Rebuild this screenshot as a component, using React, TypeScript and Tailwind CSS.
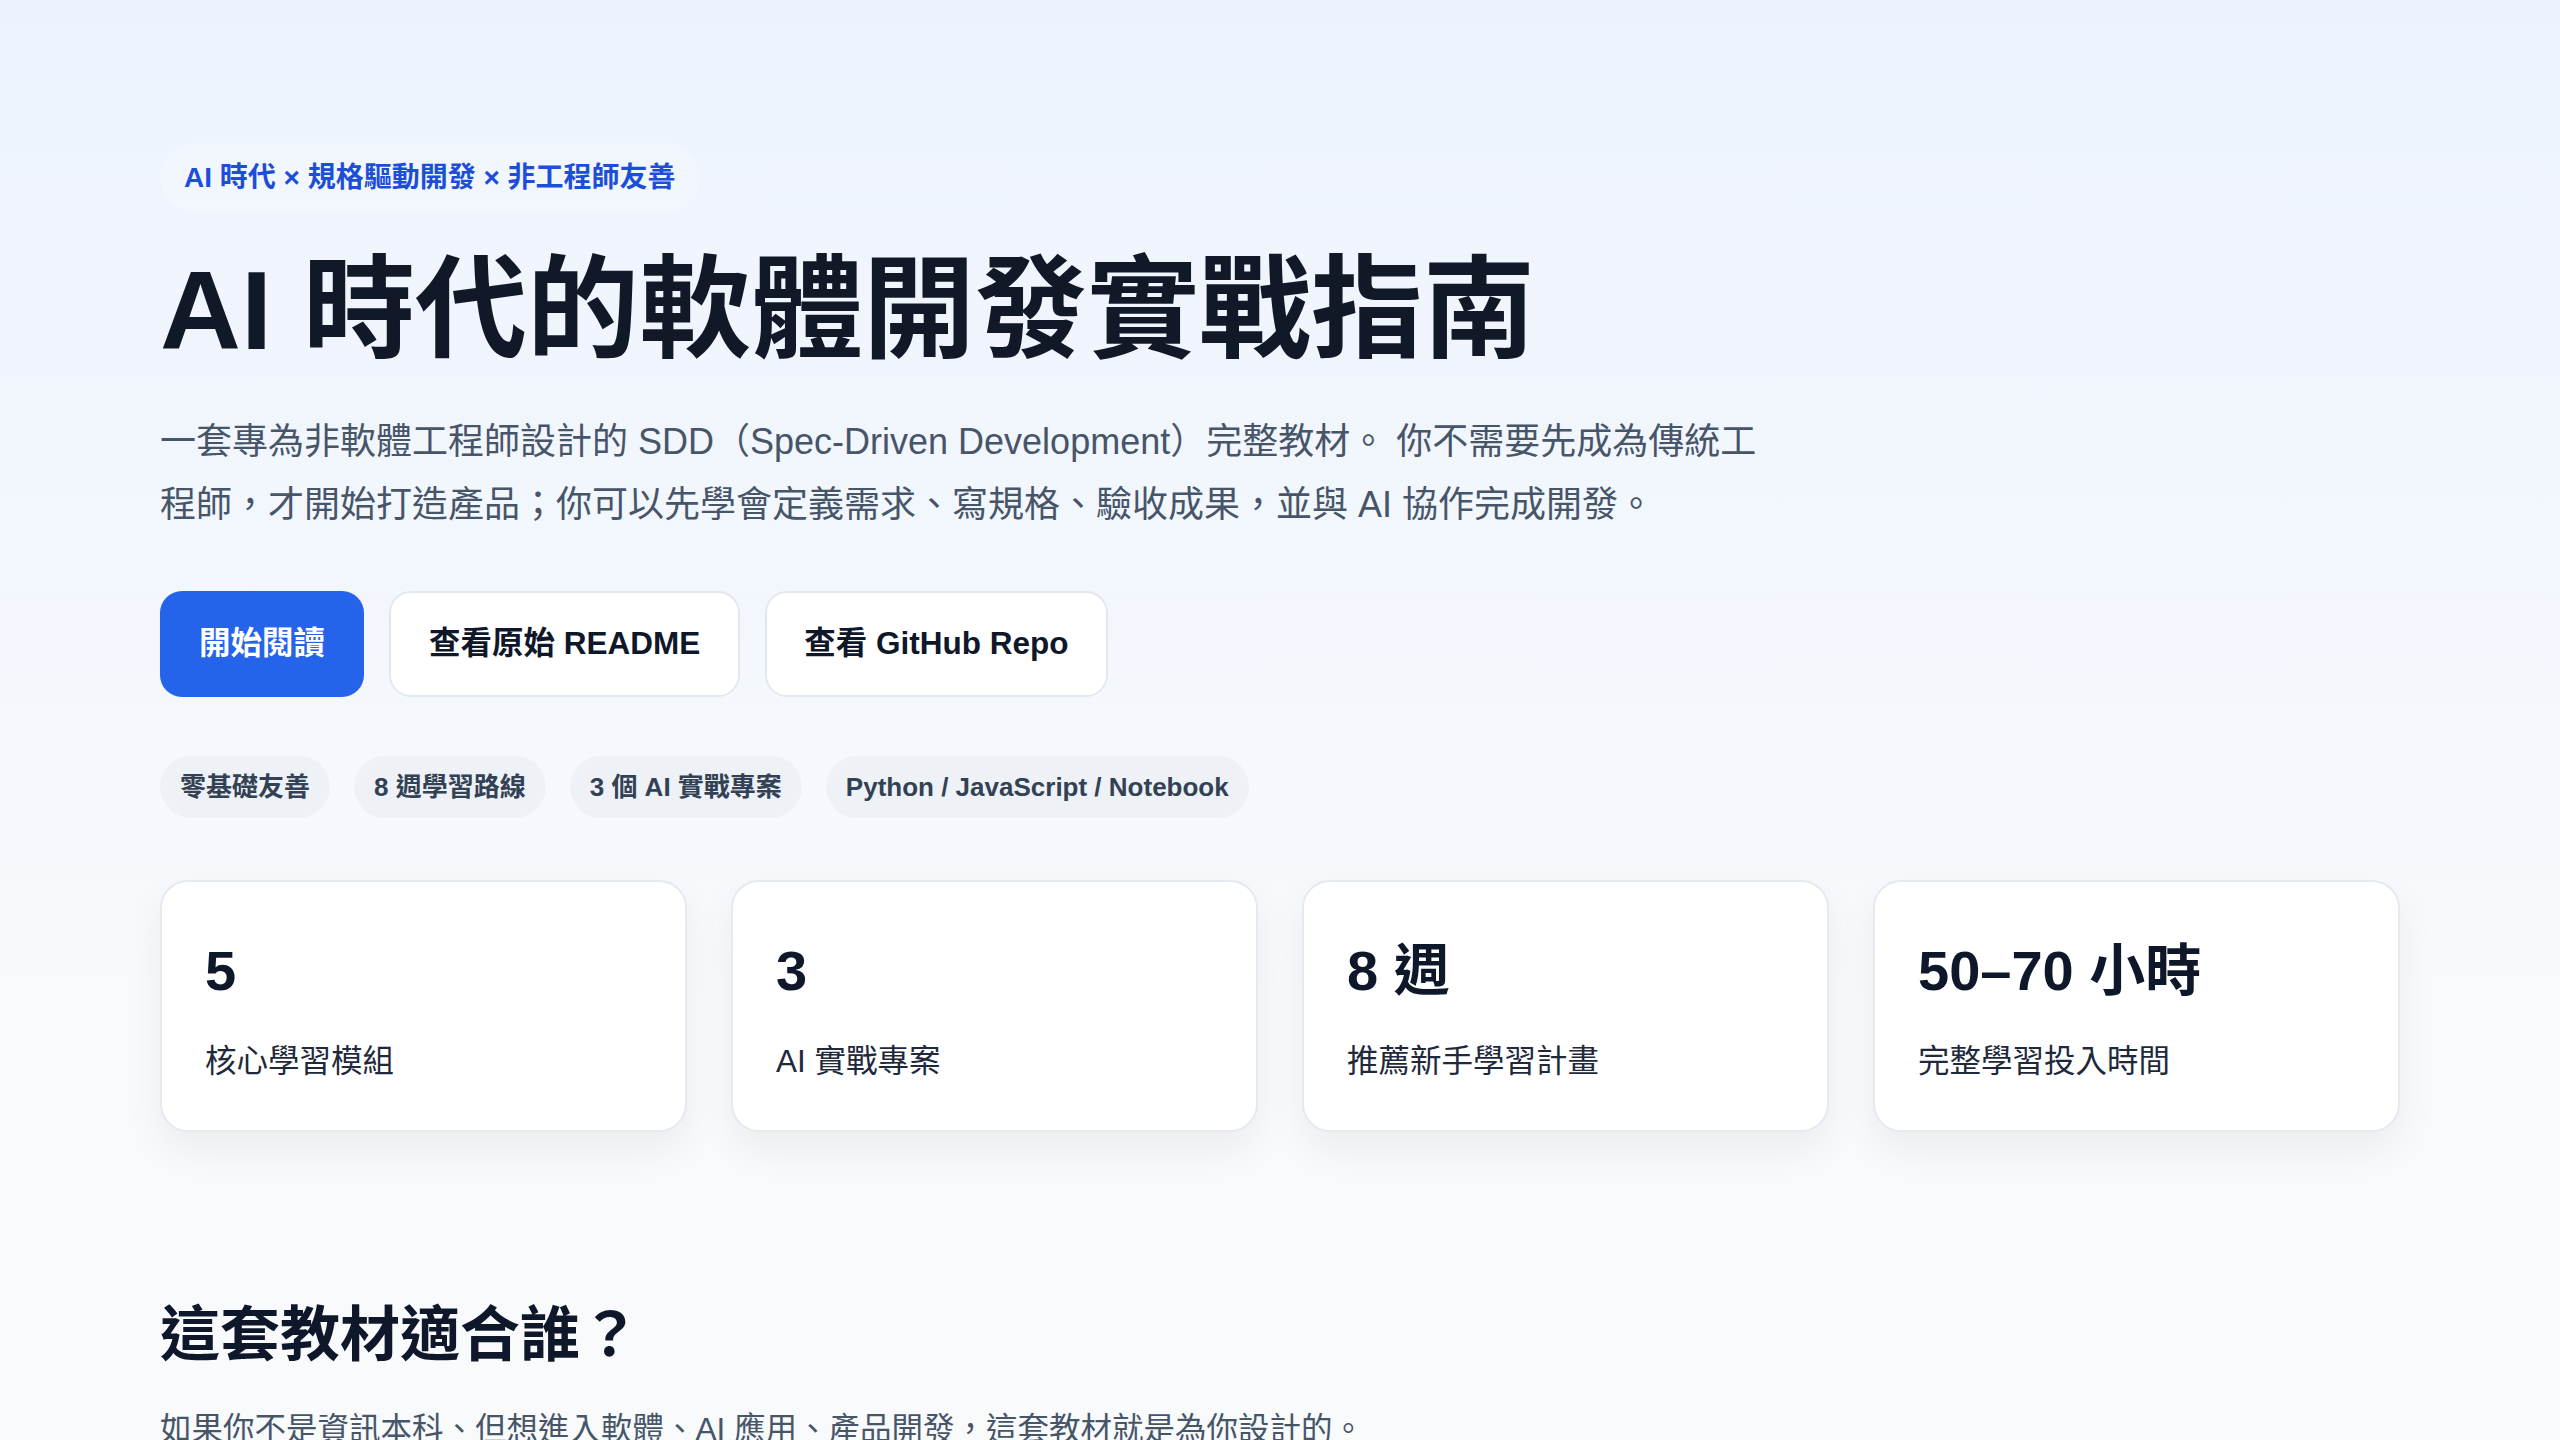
import React from "react";

const font = { fontFamily: '"Liberation Sans", "Noto Sans CJK TC", "Noto Sans", sans-serif' };

const stats = [
  { n: "5", label: "核心學習模組" },
  { n: "3", label: "AI 實戰專案" },
  { n: "8 週", label: "推薦新手學習計畫" },
  { n: "50–70 小時", label: "完整學習投入時間" },
];

const tags = ["零基礎友善", "8 週學習路線", "3 個 AI 實戰專案", "Python / JavaScript / Notebook"];

export default function App() {
  return (
    <div
      style={font}
      className="min-h-[1440px] w-full bg-[linear-gradient(180deg,#edf3fe_0px,#f3f7fd_600px,#f8fafc_1000px)] text-slate-900"
    >
      <main className="px-[160px] pt-[143px] pb-[200px]">
        <div className="inline-flex h-[70px] items-center rounded-full bg-white/20 px-[24px] text-[28px] font-semibold text-[#1d4ed8]">
          AI 時代 × 規格驅動開發 × 非工程師友善
        </div>
        <h1 className="mt-[36px] text-[112px] font-bold leading-[123px] text-[#111827]">
          AI 時代的軟體開發實戰指南
        </h1>
        <p className="mt-[38px] max-w-[1612px] text-[36px] leading-[63px] text-[#475569]">
          一套專為非軟體工程師設計的 SDD（Spec-Driven Development）完整教材。 你不需要先成為傳統工程師，才開始打造產品；你可以先學會定義需求、寫規格、驗收成果，並與 AI 協作完成開發。
        </p>
        <div className="mt-[55px] flex gap-[25px]">
          <button className="flex h-[106px] items-center rounded-[22px] bg-[#2563eb] px-[39px] text-[31.5px] font-bold text-white">
            開始閱讀
          </button>
          <button className="flex h-[106px] items-center rounded-[22px] border-2 border-[#e2e8f0] bg-white px-[38px] text-[31.5px] font-bold text-[#0f172a]">
            查看原始 README
          </button>
          <button className="flex h-[106px] items-center rounded-[22px] border-2 border-[#e2e8f0] bg-white px-[37px] text-[31.5px] font-bold text-[#0f172a]">
            查看 GitHub Repo
          </button>
        </div>
        <div className="mt-[59px] flex gap-[24px]">
          {tags.map((t) => (
            <span
              key={t}
              className="flex h-[62px] items-center rounded-full bg-[#eef2f6] px-[20px] text-[26px] font-semibold text-[#334155]"
            >
              {t}
            </span>
          ))}
        </div>
        <div className="mt-[62px] grid grid-cols-4 gap-[44px]">
          {stats.map((s) => (
            <div
              key={s.label}
              className="h-[252px] rounded-[28px] border-2 border-[#e5e9f0] bg-white px-[43px] pt-[54px] shadow-[0_18px_40px_rgba(15,23,42,0.06)]"
            >
              <div className="text-[56px] font-bold leading-[70px] text-[#0f172a]">{s.n}</div>
              <div className="mt-[31px] text-[31.5px] leading-[49px] text-[#1e293b]">{s.label}</div>
            </div>
          ))}
        </div>
        <h2 className="mt-[168px] text-[60px] font-bold leading-[72px] text-[#0f172a]">這套教材適合誰？</h2>
        <p className="mt-[30px] text-[31.5px] leading-[55px] text-[#475569]">
          如果你不是資訊本科、但想進入軟體、AI 應用、產品開發，這套教材就是為你設計的。
        </p>
      </main>
    </div>
  );
}
